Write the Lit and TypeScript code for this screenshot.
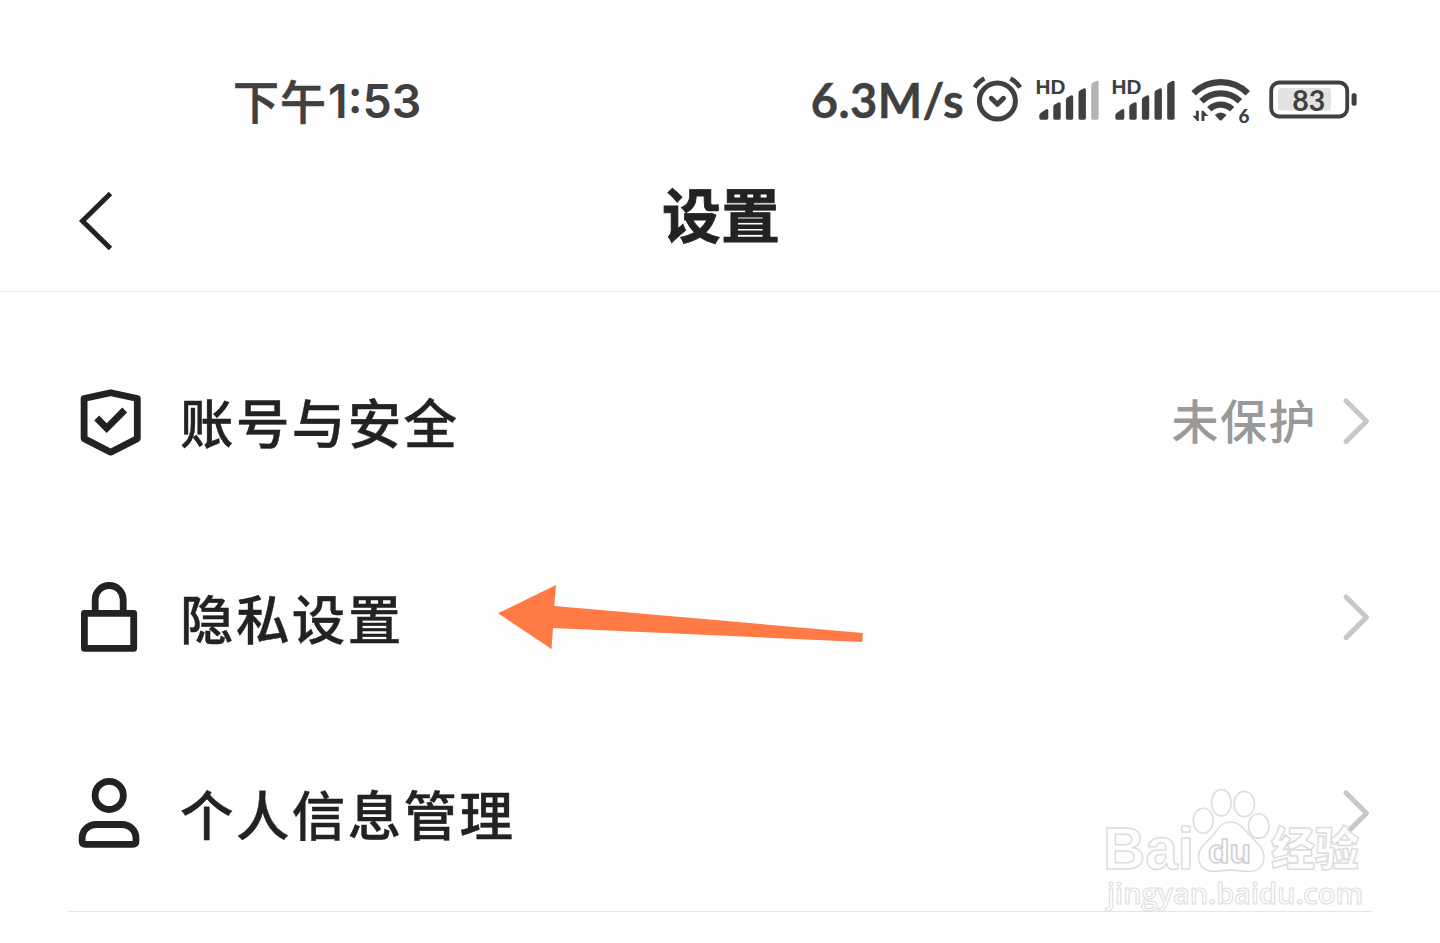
import { LitElement, html, svg, css } from 'lit';
import { customElement, property } from 'lit/decorators.js';

interface SettingItem {
  icon: string;
  label: string;
  value?: string;
}

const ITEMS: SettingItem[] = [
  { icon: 'shield', label: '账号与安全', value: '未保护' },
  { icon: 'lock', label: '隐私设置' },
  { icon: 'person', label: '个人信息管理' },
];

const ICONS: Record<string, unknown> = {
  shield: svg`
    <path d="M10.1 17.5 36.7 11.7 63.3 17.5V57.6L36.7 71.2 10.1 57.6Z" />
    <path d="m22.7 37 10 10.2L50.7 29" stroke-linejoin="miter" />
  `,
  lock: svg`
    <rect x="10.4" y="36.4" width="49.3" height="34.9" />
    <path d="M21.2 36V22.5a14 14 0 0 1 28 0V36" />
  `,
  person: svg`
    <circle cx="35.2" cy="22.4" r="14.1" />
    <path d="M22.5 51.5h25.2C56 51.5 62 57.5 62 65.5V68q0 3.4-3.4 3.4H11.5Q8.1 71.4 8.1 68V65.5C8.1 57.5 14.2 51.5 22.5 51.5Z" />
  `,
};

// Status bar at the top of the phone screen
@customElement('status-bar')
export class StatusBar extends LitElement {
  static styles = css`
    :host {
      display: flex;
      align-items: center;
      justify-content: space-between;
      height: 50px;
      padding: 76px 81px 0 233px;
      color: #404040;
      line-height: 50px;
      white-space: nowrap;
    }

    .time {
      display: flex;
      align-items: center;
    }

    .period {
      height: 55px;
      font-family: 'Noto Sans CJK SC', sans-serif;
      font-size: 46px;
      font-weight: 500;
      letter-spacing: 1px;
      -webkit-text-stroke: 0.6px #404040;
    }

    .clock {
      margin-left: 1px;
      font-family: Inter, sans-serif;
      font-size: 46.5px;
      font-weight: 600;
    }

    .indicators {
      display: flex;
      align-items: center;
    }

    .speed {
      height: 52px;
      margin-right: 8px;
      font-family: Lato, sans-serif;
      font-size: 47px;
      font-weight: 700;
      letter-spacing: 0.4px;
      -webkit-text-stroke: 0.4px #404040;
    }

    svg {
      display: block;
      height: 50px;
    }

    .alarm {
      width: 52px;
      margin-right: 11px;
    }

    .signal {
      width: 66px;
      margin-right: 10px;
    }

    .wifi {
      width: 62px;
      margin: 0 15px 0 3px;
    }

    .battery {
      width: 92px;
    }

    .line {
      fill: none;
      stroke: #404040;
      stroke-linecap: round;
      stroke-linejoin: round;
    }

    .waves {
      fill: none;
      stroke: #404040;
      stroke-width: 6.2;
    }

    text {
      font-family: Lato, sans-serif;
      font-weight: 700;
    }

    .hd {
      font-family: 'Liberation Sans', sans-serif;
    }

    .wifi text {
      font-weight: 900;
    }
  `;

  renderSignal(full: boolean) {
    return html`
      <svg class="signal" viewBox="0 0 66 50" fill="#404040">
        <text class="hd" x="0.5" y="18" font-size="19.5" textLength="30" lengthAdjust="spacingAndGlyphs">HD</text>
        <path d="M4.3 39.5q0-1.5 1.3-2.5l5.2-3.6q2.5-1 2.5 1.2V42q0 1.7-1.6 1.7H5.9q-1.6 0-1.6-1.7Z" />
        <path d="M18.3 31q0-1.5 1.3-2.4l3.7-2.1q2.4-.8 2.4 1.5V42q0 1.7-1.6 1.7h-4.2q-1.6 0-1.6-1.7Z" />
        <path d="M30.9 24q0-1.5 1.3-2.4l3.6-2.1q2.4-.8 2.4 1.5v21q0 1.7-1.6 1.7h-4.1q-1.6 0-1.6-1.7Z" />
        <path d="M43.5 17q0-1.5 1.3-2.4l3.7-2.2q2.4-.8 2.4 1.5V42q0 1.7-1.6 1.7h-4.2q-1.6 0-1.6-1.7Z" />
        <path fill=${full ? '#404040' : '#b3b3b3'} d="M56.2 9.5q0-1.5 1.3-2.4l3.7-2.2q2.4-.8 2.4 1.5V42q0 1.7-1.6 1.7h-4.2q-1.6 0-1.6-1.7Z" />
      </svg>
    `;
  }

  render() {
    return html`
      <div class="time"><span class="period">下午</span><span class="clock">1:53</span></div>
      <div class="indicators">
        <span class="speed">6.3M/s</span>
        <svg class="alarm" viewBox="0 0 52 50">
          <g class="line" stroke-width="5">
            <circle cx="25.4" cy="25" r="18" />
            <path d="m19.3 22.3 6.1 6 6.1-6" />
            <path d="M2.7 11.5Q6 6 12.4 2.5M38.4 2.5Q44.8 6 48.1 11.5" stroke-width="4.6" stroke-linecap="butt" />
          </g>
        </svg>
        ${this.renderSignal(false)}
        ${this.renderSignal(true)}
        <svg class="wifi" viewBox="0 0 62 50" fill="#404040">
          <g class="waves">
            <path d="M3.6 17.2a38.5 38.5 0 0 1 54.2 0" />
            <path d="M11.4 25.2a27.5 27.5 0 0 1 38.6 0" />
            <path d="M19.3 33.2a16.3 16.3 0 0 1 22.8 0" />
          </g>
          <path d="M24.8 39q5.9-5 11.8 0l-4.7 5q-1.2 1.2-2.4 0Z" />
          <path d="M5.900 34.700h2.900V45H7.200L2.400 39.800h3.500ZM11.500 45V34.700h1.800l5 5.200h-3.900V45Z" />
          <text x="48.6" y="46.5" font-size="19">6</text>
        </svg>
        <svg class="battery" viewBox="0 0 92 50" fill="#404040">
          <rect x="11" y="12" width="53" height="22.6" rx="3" fill="#e2e2e2" />
          <rect class="line" x="4.2" y="6.5" width="76" height="34" rx="8" stroke-width="3.8" />
          <rect x="84.6" y="17.3" width="5" height="12.4" rx="2" />
          <text x="25.3" y="34.6" font-size="28.5" textLength="33" lengthAdjust="spacingAndGlyphs">83</text>
        </svg>
      </div>
    `;
  }
}

@customElement('setting-row')
export class SettingRow extends LitElement {
  static styles = css`
    :host {
      display: flex;
      align-items: center;
      height: 196px;
      padding: 0 66px 0 74px;
      color: #222;
    }

    .icon {
      width: 72px;
      height: 80px;
      margin-right: 34px;
      fill: none;
      stroke: #222;
      stroke-width: 6.8;
      stroke-linejoin: round;
    }

    .label {
      flex: 1;
      padding-bottom: 2px;
      font-size: 53.5px;
      font-weight: 500;
      letter-spacing: 2.4px;
      -webkit-text-stroke: 0.4px #222;
    }

    .value {
      margin-right: 23px;
      padding-bottom: 5px;
      color: #999;
      font-size: 47px;
      font-weight: 500;
      letter-spacing: 1.5px;
    }

    .chevron {
      width: 34px;
      height: 50px;
      fill: none;
      stroke: #c7c7c7;
      stroke-width: 5;
      stroke-linecap: round;
      stroke-linejoin: round;
    }
  `;

  @property({ attribute: false }) item!: SettingItem;

  render() {
    const { icon, label, value } = this.item;
    return html`
      <svg class="icon" viewBox="0 0 72 80">${ICONS[icon]}</svg>
      <span class="label">${label}</span>
      ${value ? html`<span class="value">${value}</span>` : ''}
      <svg class="chevron" viewBox="0 0 34 50">
        <path d="M6 5 26.5 25.3 6 45.6" />
      </svg>
    `;
  }
}

@customElement('app-root')
export class AppRoot extends LitElement {
  static styles = css`
    :host {
      display: block;
      position: relative;
      height: 943px;
      overflow: hidden;
      background: #fefefe;
      font-family: 'Noto Sans CJK SC', sans-serif;
    }

    .nav {
      display: grid;
      grid-template-columns: 120px 1fr 120px;
      align-items: center;
      height: 165px;
      border-bottom: 1px solid #e6e6e6;
    }

    .back {
      width: 44px;
      height: 66px;
      margin: 24px 0 0 74px;
      fill: none;
      stroke: #222;
      stroke-width: 5;
    }

    .title {
      margin: 8px 0 0 2px;
      color: #222;
      font-size: 59px;
      font-weight: 700;
      line-height: 80px;
      text-align: center;
      -webkit-text-stroke: 0.8px #222;
    }

    .list {
      padding-top: 31px;
    }

    .divider {
      height: 1px;
      margin: 0 67px;
      background: #e6e6e6;
    }

    .pointer {
      position: absolute;
      left: 490px;
      top: 580px;
      width: 380px;
      height: 75px;
      fill: #ff7a45;
    }

    .watermark {
      position: absolute;
      left: 1100px;
      top: 780px;
      width: 270px;
      height: 140px;
      fill: rgba(255, 255, 255, 0.85);
      stroke: #dcdcdc;
      stroke-width: 1.5;
      stroke-linejoin: round;
    }

    .brand {
      font-family: 'Liberation Sans', sans-serif;
      font-weight: 700;
    }

    .brand-du {
      font-family: 'Liberation Sans', sans-serif;
      font-weight: 700;
      stroke: #cfcfcf;
    }

    .brand-cn {
      font-family: 'Noto Sans CJK SC', sans-serif;
      font-weight: 900;
    }

    .site {
      font-family: 'Open Sans', sans-serif;
      font-weight: 600;
      stroke-width: 1;
    }
  `;

  render() {
    return html`
      <status-bar></status-bar>
      <header class="nav">
        <svg class="back" viewBox="0 0 44 66">
          <path d="M36.5 5.5 8.5 33l28 27.5" />
        </svg>
        <h1 class="title">设置</h1>
      </header>
      <main class="list">
        ${ITEMS.map((item) => html`<setting-row .item=${item}></setting-row>`)}
        <div class="divider"></div>
      </main>
      <svg class="pointer" viewBox="490 580 380 75">
        <path d="M498 613.3 556 585 554.3 606 863 633 862 642 553 628 551.5 649Z" />
      </svg>
      <svg class="watermark" viewBox="1100 780 270 140">
        <text class="brand" x="1103" y="869" font-size="60" textLength="91" lengthAdjust="spacingAndGlyphs">Bai</text>
        <ellipse cx="1203.3" cy="820.7" rx="10" ry="12.5" />
        <ellipse cx="1221.3" cy="802.7" rx="9.8" ry="13.3" />
        <ellipse cx="1244.3" cy="804" rx="10.2" ry="12.6" />
        <ellipse cx="1258.7" cy="826" rx="10.2" ry="12.3" />
        <path d="M1230.5 822c8 0 12 5 17 11 7 8 16.5 14 16.5 24 0 9-6 14-14 14.500-8 .3-12-1.500-19-1.500s-11 1.500-17 1.500c-9 0-15.500-6-15.500-15 0-10 10-15 16-23 4-6 8-11.500 16-11.500Z" />
        <text class="brand-du" x="1208" y="862.5" font-size="33" textLength="43" lengthAdjust="spacingAndGlyphs">du</text>
        <text class="brand-cn" x="1271" y="865" font-size="46" textLength="88" lengthAdjust="spacingAndGlyphs">经验</text>
        <text class="site" x="1107" y="903.5" font-size="29" textLength="256" lengthAdjust="spacingAndGlyphs">jingyan.baidu.com</text>
      </svg>
    `;
  }
}
